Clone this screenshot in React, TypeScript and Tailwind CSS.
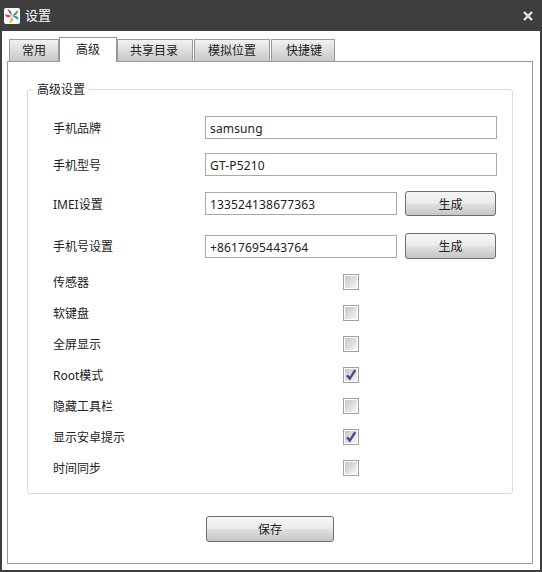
const font = "[font-family:'Noto_Sans','Noto_Sans_CJK_SC',sans-serif]";

const tabs = [
  { label: "常用", className: "w-[50px]", active: false },
  { label: "高级", className: "w-[58px]", active: true },
  { label: "共享目录", className: "w-[76px] mr-px pr-[2px]", active: false },
  { label: "模拟位置", className: "w-[76px] mr-px", active: false },
  { label: "快捷键", className: "w-[64px] pl-[2px]", active: false },
];

const options = [
  { label: "传感器", checked: false },
  { label: "软键盘", checked: false },
  { label: "全屏显示", checked: false },
  { label: "Root模式", checked: true },
  { label: "隐藏工具栏", checked: false },
  { label: "显示安卓提示", checked: true },
  { label: "时间同步", checked: false },
];

const Logo = () => (
  <svg width="16" height="16" viewBox="0 0 16 16">
    <rect width="16" height="16" rx="2" fill="#fff" />
    <path d="M7.6 7.6 3.4 1.6 C5.6 1.4 8 4 7.6 7.6Z" fill="#7b3fb5" />
    <path d="M8.2 7.6 13.8 2 C14.6 5.2 11.6 8 8.2 7.6Z" fill="#39a84a" />
    <path d="M7.4 7.8 1.2 6.2 C1 9.4 5 10.4 7.4 7.8Z" fill="#ee2f7a" />
    <path d="M7.8 8.6 5.4 14.6 C8.6 15 10 11.4 7.8 8.6Z" fill="#f7a81b" />
    <path d="M8.6 8.2 14.4 12 C15 9 11.8 6.8 8.6 8.2Z" fill="#2b8fe0" />
  </svg>
);

const TextField = ({ value, className }: { value: string; className: string }) => (
  <input
    defaultValue={value}
    className={`h-[23px] border border-[#a8a8a8] bg-white px-[4px] pt-[2px] text-[12px] tracking-[0.15px] text-[#222] outline-none ${className}`}
  />
);

const GradientButton = ({ label, className }: { label: string; className: string }) => (
  <button className={`rounded-[3px] border border-[#6e6e6e] bg-[linear-gradient(#f6f6f6,#ebebeb_50%,#e0e0e0_52%,#c6c6c6)] pt-[2px] text-[12px] text-[#222] ${className}`}>
    {label}
  </button>
);

const CheckBox = ({ checked }: { checked: boolean }) => (
  <div className="size-4 border border-[#a0a0a0] bg-white p-px">
    <div className="flex size-full items-center justify-center bg-gradient-to-br from-[#c6c6c6] to-[#f6f6f6]">
      {checked && (
        <svg width="12" height="12" viewBox="0 0 12 12">
          <path d="M2 6.4 4.8 9.6 10.2 1.2" fill="none" stroke="#3f4f8a" strokeWidth="2.4" />
        </svg>
      )}
    </div>
  </div>
);

export default function App() {
  return (
    <div className={`flex h-[572px] w-[542px] flex-col bg-white ${font}`}>
      <div className="flex h-[31px] items-center bg-[#3e3e3e] pl-[4px] pr-[9px]">
        <Logo />
        <span className="ml-[5px] text-[13px] text-white">设置</span>
        <svg className="ml-auto" width="10" height="10" viewBox="0 0 10 10">
          <path d="M1 1 9 9M9 1 1 9" stroke="#e8e8e8" strokeWidth="2.4" />
        </svg>
      </div>

      <div className="flex flex-1 flex-col border-x-2 border-b-2 border-[#3e3e3e] pb-[6px] pl-[5px] pr-[7px]">
        <div className="relative z-10 flex h-[30px] items-end pl-[2px]">
          {tabs.map((tab) =>
            tab.active ? (
              <div
                key={tab.label}
                className={`${tab.className} -mb-px flex h-[25px] items-center justify-center border border-b-0 border-[#999] bg-white text-[12px] text-[#222]`}
              >
                {tab.label}
              </div>
            ) : (
              <div
                key={tab.label}
                className={`${tab.className} flex h-[22px] items-center justify-center border border-b-0 border-[#999] bg-gradient-to-b from-[#f2f2f2] to-[#c8c8c8] text-[12px] text-[#222]`}
              >
                {tab.label}
              </div>
            ),
          )}
        </div>

        <div className="flex flex-1 flex-col border border-[#999] px-[19px] pt-[27px]">
          <div className="relative h-[405px] w-[486px] rounded-[3px] border border-[#dcdcdc] pl-[25px] pr-[15px] pt-[26px]">
            <span className="absolute left-[5px] top-[-10px] bg-white px-[4px] text-[12px] leading-[20px] text-[#222]">
              高级设置
            </span>

            <div className="flex flex-col text-[12px] text-[#222]">
              <div className="flex h-[23px] items-center">
                <span className="w-[152px] pt-[2px]">手机品牌</span>
                <TextField value="samsung" className="w-[292px]" />
              </div>
              <div className="mt-[14px] flex h-[23px] items-center">
                <span className="w-[152px] pt-[2px]">手机型号</span>
                <TextField value="GT-P5210" className="w-[292px]" />
              </div>
              <div className="mt-[15px] flex h-[25px] items-center">
                <span className="w-[152px] pt-[2px]">IMEI设置</span>
                <TextField value="133524138677363" className="w-[192px]" />
                <GradientButton label="生成" className="ml-[8px] h-[25px] w-[91px]" />
              </div>
              <div className="mt-[17px] flex h-[26px] items-center">
                <span className="w-[152px] pt-[2px]">手机号设置</span>
                <TextField value="+8617695443764" className="w-[192px]" />
                <GradientButton label="生成" className="ml-[8px] h-[26px] w-[91px]" />
              </div>

              <div className="mt-[15px] flex flex-col gap-[15px]">
                {options.map((option) => (
                  <div key={option.label} className="flex h-4 items-center">
                    <span className="w-[290px] pt-[2px]">{option.label}</span>
                    <CheckBox checked={option.checked} />
                  </div>
                ))}
              </div>
            </div>
          </div>

          <div className="mt-[22px] flex pl-[179px]">
            <GradientButton label="保存" className="h-[26px] w-[128px]" />
          </div>
        </div>
      </div>
    </div>
  );
}
